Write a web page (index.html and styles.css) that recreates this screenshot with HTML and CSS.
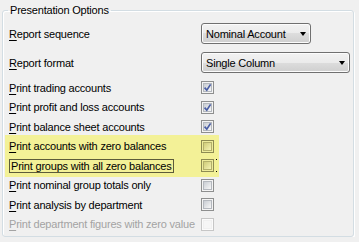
FILE: index.html
```html
<!DOCTYPE html>
<html lang="en">
<head>
  <meta charset="UTF-8" />
  <title>Presentation Options</title>
  <link rel="stylesheet" href="styles.css">
</head>
<body>

  <fieldset class="group">
    <legend class="group-title">Presentation Options</legend>

    <div class="field">
      <span class="label"><u>R</u>eport sequence</span>
      <div class="combo combo-short"><span>Nominal Account</span><i class="arrow"></i></div>
    </div>
    <div class="field">
      <span class="label"><u>R</u>eport format</span>
      <div class="combo combo-wide"><span>Single Column</span><i class="arrow"></i></div>
    </div>

    <div class="checks">
      <div class="check">
        <span class="label"><u>P</u>rint trading accounts</span>
        <span class="box"><span class="inner"><svg viewBox="0 0 9 9"><path d="M1.6 4.6 L3.8 7.2 L7.6 1.4" /></svg></span></span>
      </div>
      <div class="check">
        <span class="label"><u>P</u>rint profit and loss accounts</span>
        <span class="box"><span class="inner"><svg viewBox="0 0 9 9"><path d="M1.6 4.6 L3.8 7.2 L7.6 1.4" /></svg></span></span>
      </div>
      <div class="check">
        <span class="label"><u>P</u>rint balance sheet accounts</span>
        <span class="box"><span class="inner"><svg viewBox="0 0 9 9"><path d="M1.6 4.6 L3.8 7.2 L7.6 1.4" /></svg></span></span>
      </div>

      <div class="marked">
        <div class="check">
          <span class="label"><u>P</u>rint accounts with zero balances</span>
          <span class="box"><span class="inner"></span></span>
        </div>
        <div class="check">
          <span class="label focused">Print groups with all zero balances</span>
          <span class="box"><span class="inner"></span></span>
          <span class="dots"></span>
        </div>
      </div>

      <div class="check">
        <span class="label"><u>P</u>rint nominal group totals only</span>
        <span class="box"><span class="inner"></span></span>
      </div>
      <div class="check">
        <span class="label"><u>P</u>rint analysis by department</span>
        <span class="box"><span class="inner"></span></span>
      </div>
      <div class="check disabled">
        <span class="label"><u>P</u>rint department figures with zero value</span>
        <span class="box"><span class="inner"></span></span>
      </div>
    </div>
  </fieldset>

</body>
</html>
```

FILE: styles.css
```css
body {
  margin: 0;
  padding-top: 3px;
  background: #f0f0f0;
  font-family: "Liberation Sans", Arial, sans-serif;
  font-size: 11px;
  letter-spacing: -0.2px;
  color: #000;
}

.group {
  box-sizing: border-box;
  width: 352px;
  height: 234px;
  margin: 0 0 0 2px;
  padding: 6px 0 0 6px;
  border: 1px solid #d3dde3;
  border-radius: 3px;
  box-shadow: 1px 1px 0 #fff, inset 1px 1px 0 #fff;
}

.group-title {
  margin-left: -1px;
  padding: 0 2px;
  line-height: 14px;
}

.label {
  white-space: nowrap;
}

u {
  text-decoration-thickness: 1px;
  text-underline-offset: 2px;
}

.field {
  display: grid;
  grid-template-columns: 192px auto;
  align-items: center;
  height: 21px;
  margin-bottom: 8px;
}

.combo {
  box-sizing: border-box;
  height: 21px;
  display: flex;
  align-items: center;
  justify-content: space-between;
  padding: 0 4px 0 4px;
  border: 1px solid #707070;
  border-radius: 3px;
  background: linear-gradient(#f2f2f2 0%, #ebebeb 50%, #dddddd 50%, #cfcfcf 100%);
  box-shadow: inset 0 0 0 1px #fcfcfc;
}

.combo-short { width: 110px; }
.combo-wide { width: 149px; }

.arrow {
  width: 0;
  height: 0;
  border-left: 3.5px solid transparent;
  border-right: 3.5px solid transparent;
  border-top: 4px solid #000;
}

.checks {
  margin-top: -3px;
}

.check {
  display: grid;
  grid-template-columns: 192px 13px auto;
  align-items: center;
  height: 19.5px;
}

.box {
  box-sizing: border-box;
  width: 13px;
  height: 13px;
  padding: 1px;
  border: 1px solid #8e8f8f;
  background: #f4f4f4;
}

.inner {
  display: block;
  box-sizing: border-box;
  width: 9px;
  height: 9px;
  border: 1px solid #b4b8be;
  background: linear-gradient(135deg, #c9cdd3, #f7f7f7);
}

.inner svg {
  display: block;
  width: 9px;
  height: 9px;
  margin: -1px;
}

.inner path {
  fill: none;
  stroke: #4a5ea4;
  stroke-width: 1.7;
}

.marked {
  width: 210px;
  margin: -2px 0 -1px -4px;
  padding: 2px 0 1px 4px;
  background: #f3f197;
}

.marked .box {
  border-color: #8d8b52;
  background: #eeec9c;
}

.marked .inner {
  border-color: #b3b06a;
  background: linear-gradient(135deg, #cfcc78, #f5f3b4);
}

.focused {
  justify-self: start;
  margin-left: 0;
  padding: 0 1px;
  border: 1px solid #5c5b3a;
  line-height: 12px;
}

.dots {
  width: 1px;
  height: 13px;
  margin-left: 2px;
  background: linear-gradient(#000 0 1px, transparent 1px 12px, #000 12px);
}

.disabled .label {
  color: #a3a3a3;
}

.disabled .box {
  border-color: #c6c6c6;
  background: #fbfbfb;
}

.disabled .inner {
  border-color: #f0f0f0;
  background: #f6f6f6;
}
```
